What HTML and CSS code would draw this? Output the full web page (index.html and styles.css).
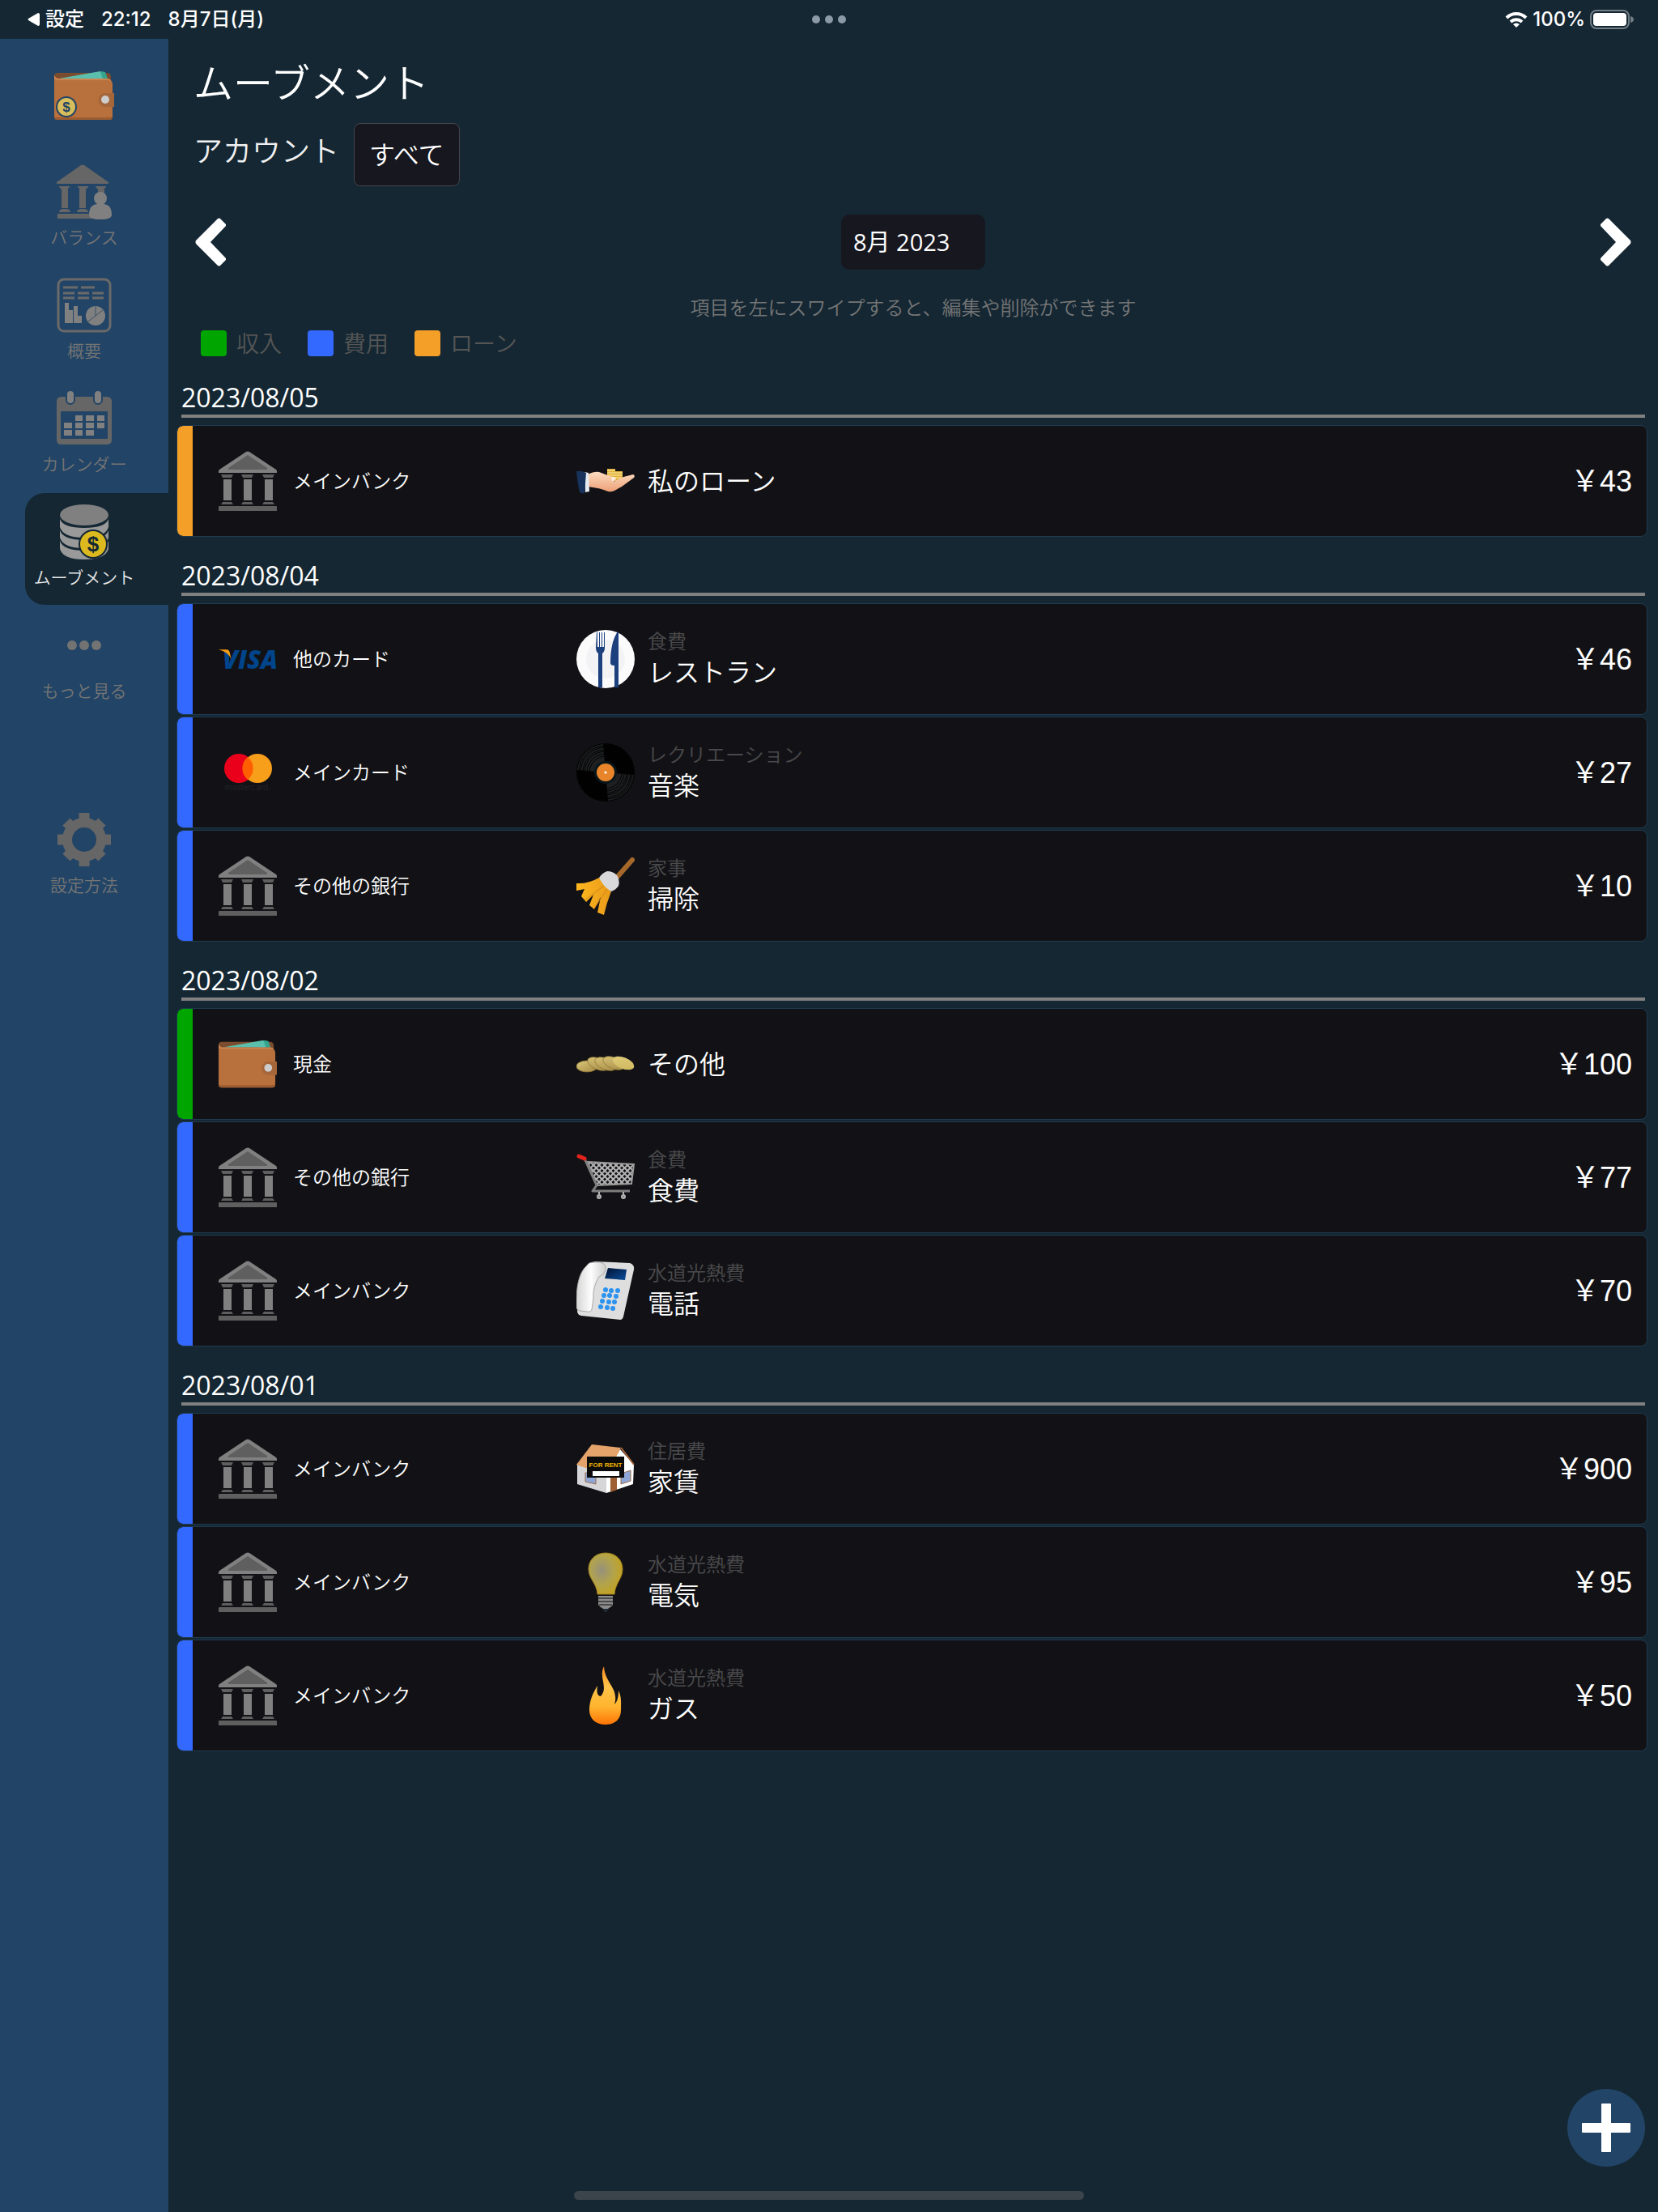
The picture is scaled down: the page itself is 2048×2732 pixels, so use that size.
FILE: index.html
```html
<!DOCTYPE html>
<html lang="ja">
<head>
<meta charset="utf-8">
<meta name="viewport" content="width=device-width, initial-scale=1">
<title>ムーブメント</title>
<link rel="stylesheet" href="styles.css">
</head>
<body>
<svg class="sprite" aria-hidden="true">
  <defs>
    <linearGradient id="flame-fill" x1="0" y1="0" x2="0" y2="1"><stop offset="0" stop-color="#ff8a1e"/><stop offset=".35" stop-color="#ffc44a"/><stop offset=".7" stop-color="#ffb32e"/><stop offset="1" stop-color="#ff7404"/></linearGradient>
    <radialGradient id="bulb-fill" cx=".38" cy=".42" r=".6"><stop offset="0" stop-color="#97917c"/><stop offset=".6" stop-color="#b3a44a"/><stop offset="1" stop-color="#c0a226"/></radialGradient>
    <linearGradient id="screen-fill" x1="0" y1="0" x2="1" y2="1"><stop offset="0" stop-color="#02102c"/><stop offset="1" stop-color="#0a4fa0"/></linearGradient>
    <linearGradient id="handset-fill" x1="0" y1="0" x2="1" y2="0"><stop offset="0" stop-color="#d4d4d4"/><stop offset=".5" stop-color="#fdfdfd"/><stop offset="1" stop-color="#cfcfcf"/></linearGradient>
    <linearGradient id="skin-fill" x1="0" y1="0" x2="0" y2="1"><stop offset="0" stop-color="#fbdcc0"/><stop offset="1" stop-color="#eea077"/></linearGradient>
    <linearGradient id="coin-fill" x1="0" y1="0" x2="1" y2="1"><stop offset="0" stop-color="#dcc87a"/><stop offset="1" stop-color="#a58a45"/></linearGradient>
    <linearGradient id="front-coin-fill" x1="0" y1="0" x2="1" y2="1"><stop offset="0" stop-color="#e0cd7e"/><stop offset="1" stop-color="#cdb55a"/></linearGradient>
    <linearGradient id="broom-fill" x1="0" y1="0" x2="1" y2="0"><stop offset="0" stop-color="#ffb81f"/><stop offset="1" stop-color="#e89a1a"/></linearGradient>
    <pattern id="mesh" width="7" height="7" patternUnits="userSpaceOnUse"><path d="M0 0 7 7M7 0 0 7" stroke="#b4b4b4" stroke-width="2"/></pattern>
  </defs>
  <symbol id="bank" viewBox="0 0 72 74">
    <path fill="#808080" d="M34 1q2-1 4 0L71 23q1 1 1 2v2H0v-2q0-1 1-2z"/>
    <path fill="#5f5f5f" d="M36 5 60 21v2H12v-2z"/>
    <path fill="#5f5f5f" d="M3 29h15l-2 4H5zM28 29h15l-2 4H30zM54 29h15l-2 4H56zM5 63h11l2 3H3zM30 63h11l2 3H28zM56 63h11l2 3H54zM0 69q0-1 1-1h70q1 0 1 1v5H0z"/>
    <path fill="#808080" d="M6 35h10v26H6zM31 35h10v26H31zM57 35h10v26H57z"/>
  </symbol>
  <symbol id="wallet" viewBox="0 0 74 60">
    <path fill="#7b4c2e" d="M0 6q0-4 4-4h61q5 0 5 5v5H0z"/>
    <path fill="#35a48c" d="M58 0l5 1 3 8H50z"/>
    <path fill="#5bbfae" d="M6 9 57 0l3 9z"/>
    <path fill="#b8703c" d="M0 5q2 5 6 5h60q6 1 6 6v40q0 4-4 4H4q-4 0-4-4z"/>
    <path fill="#cc8450" d="M0 5q2 4 6 4h60q3 0 5 4-2-2-5-2H6q-5 0-6-2z"/>
    <path fill="#9b5c31" d="M0 56q1 1 4 1h64q3 0 4-1 0 4-4 4H4q-4 0-4-4z"/>
    <path fill="#a5663a" d="M63 27h11v17H63a8 8 0 0 1 0-17z"/>
    <circle cx="63" cy="35" r="5" fill="#cdcdcd"/>
  </symbol>
  <symbol id="loan" viewBox="0 0 72 32">
    <path fill="#e0b03c" d="M38 1h10v15H38zM48 4h9v12h-9z"/>
    <path stroke="#fff0a0" stroke-width="1" d="M38 3h10M38 6h10M38 9h10M38 12h10M48 6h9M48 9h9M48 12h9"/>
    <path fill="url(#skin-fill)" d="M14 8q8-4 14-3 8 3 16 6 5 0 3 4l-1 2q12-7 24-9 3 1 1 4L56 23l-9 5q-4 2-8 1-8-4-25-6z"/>
    <path fill="#fff" d="M43 11q6-1 6 3l-4 3q-2-2-2-6z" opacity=".6"/>
    <path fill="#e4ebf2" d="M10 5l5 1 1 23-5 1z"/>
    <path fill="#17335c" d="M0 4q6-1 12 2l-2 25q-4 1-6-1Q1 18 0 4z"/>
  </symbol>
  <symbol id="restaurant" viewBox="0 0 72 72">
    <circle cx="36" cy="36" r="36" fill="#fbfbfc"/><circle cx="36" cy="36" r="24" fill="#f3f3f5"/>
    <path fill="#1c3f7e" d="M25 3h1v18h2V3h1v18h2V3h1v18h2V3h1v19q0 5-3 7v42h-5V29q-3-2-3-7zM51 2l1 1v68h-5V44q-5 0-5-3 0-26 9-39z"/>
  </symbol>
  <symbol id="vinyl" viewBox="0 0 72 72">
    <circle cx="36" cy="36" r="36" fill="#020202"/>
    <path fill="#1d1f20" d="M36 36 1 33A36 36 0 0 1 33 1zM36 36l35 3a36 36 0 0 1-32 32z"/>
    <g fill="none" stroke="#020202" stroke-width="1"><circle cx="36" cy="36" r="33"/><circle cx="36" cy="36" r="31"/><circle cx="36" cy="36" r="28"/><circle cx="36" cy="36" r="26"/><circle cx="36" cy="36" r="23"/><circle cx="36" cy="36" r="20"/></g>
    <circle cx="36" cy="36" r="14" fill="#08161a"/><circle cx="36" cy="36" r="11" fill="#e8842a"/><circle cx="36" cy="36" r="1.6" fill="#fff"/>
  </symbol>
  <symbol id="broom" viewBox="0 0 72 72">
    <path stroke="#a5682a" stroke-width="6" stroke-linecap="round" d="M47 29 69 4"/>
    <path fill="url(#broom-fill)" d="M28 26Q14 34 0 33v9q6-1 10-2L6 49l6 7 9-9-5 13 6 5 8-15-4 19 8 3q3-14 9-29z"/>
    <path stroke="#cf8416" stroke-width="1" d="M34 36 10 54M38 40 22 64" />
    <path fill="#d9d9dc" d="M28 26q4-6 10-8 7 0 12 5 4 6 2 13-3 5-9 7-10-6-15-17z"/>
  </symbol>
  <symbol id="coins" viewBox="0 0 72 20">
    <g fill="url(#coin-fill)" stroke="#8e7534" stroke-width=".7">
      <ellipse cx="13" cy="13" rx="13" ry="7"/>
      <ellipse cx="27" cy="10" rx="14" ry="7" transform="rotate(22 27 10)"/>
      <ellipse cx="36" cy="10" rx="14" ry="7" transform="rotate(22 36 10)"/>
      <ellipse cx="46" cy="9" rx="14" ry="7" transform="rotate(22 46 9)"/>
    </g>
    <ellipse cx="58" cy="9" rx="14" ry="7" transform="rotate(22 58 9)" fill="url(#front-coin-fill)"/>
  </symbol>
  <symbol id="cart" viewBox="0 0 72 58">
    <path fill="url(#mesh)" stroke="#9a9a9a" stroke-width="2" d="M14 10 71 13l-3 24-43 2z"/>
    <path fill="none" stroke="#7e7e7e" stroke-width="3" stroke-linejoin="round" d="m10 6 15 33-5 7h46"/>
    <path stroke="#e3231b" stroke-width="5" stroke-linecap="round" d="m3 3 7 3"/>
    <g fill="#777" stroke="#b5b5b5" stroke-width="2"><circle cx="28" cy="53" r="2"/><circle cx="58" cy="53" r="2"/><path d="M28 47v3M58 47v3"/></g>
  </symbol>
  <symbol id="phone" viewBox="0 0 72 72">
    <path fill="#dedede" d="M22 0 66 2q6 2 5 8L58 68q-1 4-4 4L6 67q-5-1-5-6z"/>
    <path fill="url(#screen-fill)" d="M39 8l23 2-2 13-25-2z"/>
    <path fill="url(#handset-fill)" stroke="#a8a8a8" stroke-width="1" d="M20 1h9q9 2 7 10-2 6-8 8-8 12-7 27l-2 13q-1 4-6 3l-9-1q-4-1-4-5Q-1 18 12 6q3-5 8-5z"/>
    <g fill="#2b93ef"><circle cx="36" cy="35" r="3"/><circle cx="43" cy="36" r="3"/><circle cx="51" cy="36" r="3"/><circle cx="34" cy="42" r="3"/><circle cx="41" cy="42" r="3"/><circle cx="49" cy="43" r="3"/><circle cx="32" cy="49" r="3"/><circle cx="40" cy="50" r="3"/><circle cx="47" cy="50" r="3"/><circle cx="30" cy="56" r="3"/><circle cx="38" cy="57" r="3"/><circle cx="45" cy="58" r="3"/></g>
  </symbol>
  <symbol id="bulb" viewBox="0 0 72 74">
    <path fill="url(#bulb-fill)" stroke="#9c7d1c" stroke-width="1" d="M36 1c13 0 21 9 21 20 0 12-9 17-10 31H26C25 38 15 33 15 21 15 10 23 1 36 1z"/>
    <path fill="#8c8c8c" d="M27 54h18v11q-2 3-5 4l-4 5-4-5q-3-1-5-4z"/>
    <path stroke="#4a4a4a" stroke-width="2" d="M27 57h18M27 61h18M28 65h16"/>
    <path fill="#1d2a38" d="M32 70h8l-4 4z"/>
  </symbol>
  <symbol id="flame" viewBox="0 0 72 72">
    <path fill="url(#flame-fill)" d="M34 0c-7 14 6 26-4 37-5 0-5-7-4-13-5 8-10 18-10 30 0 11 8 18 20 18s19-7 19-18c0-8 1-16-3-24 0 7-1 13-5 17 6-20-12-26-13-47z"/>
  </symbol>
  <symbol id="nav-balance" viewBox="0 0 68 68">
    <path fill="#666" d="M30 1q2-1 4 0L64 22q1 2-2 2H2q-3 0-2-2zM3 27h13v1l-3 3H6l-3-3zM26 27h13v1l-3 3h-7l-3-3zM48 27h13v1l-3 3h-7l-3-3zM6 31h8v23H6zM28 31h8v23h-8zM51 31h8v10h-8zM3 59q0-3 4-4h6q4 1 4 4zM25 59q0-3 4-4h6q4 1 4 4zM1 61h55v6H1z"/>
    <g fill="#808080"><path d="M40 62q0-12 10-13h8q10 1 10 13 0 6-14 6t-14-6z"/><circle cx="54" cy="42" r="8"/></g>
  </symbol>
  <symbol id="nav-overview" viewBox="0 0 68 68">
    <rect x="2" y="2" width="64" height="64" rx="7" fill="none" stroke="#6a6a6a" stroke-width="3"/>
    <path stroke="#6a6a6a" stroke-width="3" d="M8 12h18M30 12h17M8 19h14M26 19h14M44 19h14M8 25h14M26 25h14M44 25h14"/>
    <path fill="#808080" d="M10 31h5v25h-5zM15 40h5v16h-5zM21 35h5v21h-5zM26 47h5v9h-5z"/>
    <circle cx="48" cy="47" r="12" fill="#808080"/><path stroke="#3a506a" stroke-width="1" fill="none" d="M48 35v12M39 54l18-14"/>
  </symbol>
  <symbol id="nav-calendar" viewBox="0 0 68 68">
    <path fill="#666" fill-rule="evenodd" d="M6 7h56q6 0 6 6v47q0 6-6 6H6q-6 0-6-6V13q0-6 6-6zM5 25v34h58V25z"/>
    <g fill="#808080" stroke="#224466" stroke-width="2"><rect x="12" y="-1" width="10" height="17" rx="5"/><rect x="46" y="-1" width="10" height="17" rx="5"/></g>
    <path fill="#808080" d="M23 30h9v7h-9zM36 30h10v7H36zM50 30h9v7h-9zM9 39h10v7H9zM23 39h9v7h-9zM36 39h10v7H36zM50 39h9v7h-9zM9 48h10v7H9zM23 48h9v7h-9zM36 48h10v7H36z"/>
  </symbol>
  <symbol id="nav-more" viewBox="0 0 68 68"><g fill="#737373"><circle cx="19" cy="34" r="6"/><circle cx="34" cy="34" r="6"/><circle cx="49" cy="34" r="6"/></g></symbol>
  <symbol id="nav-settings" viewBox="0 0 68 68">
    <g fill="none" stroke="#666"><circle cx="34" cy="34" r="21" stroke-width="12"/>
    <g stroke-width="13"><path d="M34 1v10M34 57v10M1 34h10M57 34h10"/><path d="m12 12 7 7M49 49l7 7M56 12l-7 7M19 49l-7 7"/></g></g>
  </symbol>
</svg>

<header class="status">
  <div class="status-side">
    <a class="status-back" href="#settings"><svg width="15" height="16" viewBox="0 0 15 16" aria-hidden="true"><path fill="#fff" d="M1 7 13 0q2 0 2 2v12q0 2-2 2L1 9q-1-1 0-2z"/></svg>設定</a>
    <span>22:12</span><span>8月7日(月)</span>
  </div>
  <svg class="status-dots" viewBox="0 0 44 10" aria-hidden="true"><g fill="#8b9aa6"><circle cx="6" cy="5" r="5"/><circle cx="22" cy="5" r="5"/><circle cx="38" cy="5" r="5"/></g></svg>
  <div class="status-side status-right">
    <svg width="28" height="20" viewBox="0 0 28 20" aria-hidden="true"><g fill="none" stroke="#fff" stroke-width="4"><path d="M2 8a17 17 0 0 1 24 0"/><path d="M7 13a10 10 0 0 1 14 0"/></g><path fill="#fff" d="m10 16a6 6 0 0 1 8 0l-4 4z"/></svg>
    <span>100%</span>
    <svg width="54" height="24" viewBox="0 0 54 24" aria-hidden="true"><rect x="1" y="1" width="47" height="22" rx="7" fill="none" stroke="#727d85" stroke-width="2"/><rect x="4" y="4" width="41" height="16" rx="4" fill="#fff"/><path fill="#727d85" d="M50 8q4 1 4 4t-4 4z"/></svg>
  </div>
</header>

<div class="layout">
  <nav class="sidebar">
    <svg class="logo" viewBox="0 0 74 60" role="img" aria-label="Wallet"><use href="#wallet" width="74" height="60"/><circle cx="15" cy="44" r="12" fill="#d8bd5c" stroke="#224466" stroke-width="2"/><text x="15" y="50" class="logo-sign">$</text></svg>
    <a class="tab" href="#balance"><svg><use href="#nav-balance"/></svg>バランス</a>
    <a class="tab" href="#overview"><svg><use href="#nav-overview"/></svg>概要</a>
    <a class="tab" href="#calendar"><svg><use href="#nav-calendar"/></svg>カレンダー</a>
    <a class="tab tab-active" href="#movements" aria-current="page"><svg viewBox="0 0 68 68">
      <g fill="#999"><path d="M4 18q4 11 30 11t30-11v10q-4 13-30 13T4 28z"/><path d="M4 32q4 12 30 12t30-12v9q-4 13-30 13T4 41z"/><path d="M4 45q4 12 30 12t30-12v10q-4 13-30 13T4 55z"/></g>
      <ellipse cx="34" cy="13" rx="30" ry="13" fill="#808080"/>
      <circle cx="45" cy="49" r="17" fill="#dcb91f" stroke="#142733" stroke-width="2"/>
      <text x="45" y="58" class="coin-sign">$</text>
    </svg>ムーブメント</a>
    <a class="tab" href="#more"><svg><use href="#nav-more"/></svg>もっと見る</a>
    <a class="tab tab-settings" href="#settings"><svg><use href="#nav-settings"/></svg>設定方法</a>
  </nav>

  <main class="content">
    <h1>ムーブメント</h1>
    <div class="account-filter">
      <label for="account">アカウント</label>
      <button id="account" type="button">すべて</button>
    </div>
    <div class="month-nav">
      <button class="arrow" type="button" aria-label="前の月"><svg width="38" height="60" viewBox="0 0 38 60"><path fill="#fff" d="M1 28 28 1q2-1 3 0l7 7v2L19 30l19 20v2l-7 7q-1 1-3 0L1 32q-1-2 0-4z"/></svg></button>
      <input class="month" type="text" value="8月 2023" aria-label="月" readonly>
      <button class="arrow" type="button" aria-label="次の月"><svg width="38" height="60" viewBox="0 0 38 60"><path fill="#fff" d="M37 28 10 1Q8 0 7 1L0 8v2l19 20L0 50v2l7 7q1 1 3 0l27-27q1-2 0-4z"/></svg></button>
    </div>
    <p class="hint">項目を左にスワイプすると、編集や削除ができます</p>
    <ul class="legend">
      <li class="income">収入</li>
      <li class="expense">費用</li>
      <li class="loan">ローン</li>
    </ul>

    <div class="days">
      <section>
        <h2>2023/08/05</h2>
        <ul class="rows">
          <li class="row loan"><div class="account"><svg><use href="#bank"/></svg>メインバンク</div><svg class="icon"><use href="#loan"/></svg><div class="category">私のローン</div><div class="amount">￥43</div></li>
        </ul>
      </section>
      <section>
        <h2>2023/08/04</h2>
        <ul class="rows">
          <li class="row expense"><div class="account"><svg viewBox="0 0 74 74"><text x="5" y="49" class="visa-word">VISA</text><path fill="#f59b11" d="M0 25h10q3 0 4 3l2 9Q12 28 0 25z"/></svg>他のカード</div><svg class="icon"><use href="#restaurant"/></svg><div class="category"><small>食費</small>レストラン</div><div class="amount">￥46</div></li>
          <li class="row expense"><div class="account"><svg viewBox="0 0 72 72"><circle cx="25" cy="31" r="18" fill="#eb001b"/><circle cx="48" cy="31" r="18" fill="#f79e1b"/><path fill="#ff5f00" d="M36 17a18 18 0 0 1 0 28 18 18 0 0 1 0-28z"/><text x="36" y="58" class="mastercard-word">mastercard.</text></svg>メインカード</div><svg class="icon"><use href="#vinyl"/></svg><div class="category"><small>レクリエーション</small>音楽</div><div class="amount">￥27</div></li>
          <li class="row expense"><div class="account"><svg><use href="#bank"/></svg>その他の銀行</div><svg class="icon"><use href="#broom"/></svg><div class="category"><small>家事</small>掃除</div><div class="amount">￥10</div></li>
        </ul>
      </section>
      <section>
        <h2>2023/08/02</h2>
        <ul class="rows">
          <li class="row income"><div class="account"><svg><use href="#wallet"/></svg>現金</div><svg class="icon"><use href="#coins"/></svg><div class="category">その他</div><div class="amount">￥100</div></li>
          <li class="row expense"><div class="account"><svg><use href="#bank"/></svg>その他の銀行</div><svg class="icon"><use href="#cart"/></svg><div class="category"><small>食費</small>食費</div><div class="amount">￥77</div></li>
          <li class="row expense"><div class="account"><svg><use href="#bank"/></svg>メインバンク</div><svg class="icon"><use href="#phone"/></svg><div class="category"><small>水道光熱費</small>電話</div><div class="amount">￥70</div></li>
        </ul>
      </section>
      <section>
        <h2>2023/08/01</h2>
        <ul class="rows">
          <li class="row expense"><div class="account"><svg><use href="#bank"/></svg>メインバンク</div><svg class="icon" viewBox="0 0 72 60">
            <path fill="#d6d6d8" d="M1 24h36v36L1 49z"/><path fill="#fff" d="M37 34 54 6l17 19-1 24-33 11z"/>
            <path fill="#e3a36b" d="M19 0l36 4-18 34L0 25z"/><path fill="none" stroke="#a8673c" stroke-width="2" d="M55 4l16 21"/>
            <path fill="#8ea6d6" stroke="#9c6b4b" stroke-width="1" d="M11 35h13v14l-13-3zM55 36l12-4v13l-12 4z"/>
            <path fill="#9e5f35" d="M42 38h8v18l-8 3z"/>
            <path fill="#0b0b0b" d="M13 15h46v26H13z"/><path fill="#fff" d="M20 33h33v6H20z"/>
            <text x="36" y="28" class="sign-word">FOR RENT</text>
          </svg><div class="category"><small>住居費</small>家賃</div><div class="amount">￥900</div></li>
          <li class="row expense"><div class="account"><svg><use href="#bank"/></svg>メインバンク</div><svg class="icon"><use href="#bulb"/></svg><div class="category"><small>水道光熱費</small>電気</div><div class="amount">￥95</div></li>
          <li class="row expense"><div class="account"><svg><use href="#bank"/></svg>メインバンク</div><svg class="icon"><use href="#flame"/></svg><div class="category"><small>水道光熱費</small>ガス</div><div class="amount">￥50</div></li>
        </ul>
      </section>
    </div>
  </main>
</div>

<button class="add" type="button" aria-label="追加"><svg width="60" height="60" viewBox="0 0 60 60"><path fill="#fff" d="M25 0h10q1 0 1 1v23h23q1 0 1 1v10q0 1-1 1H36v23q0 1-1 1H25q-1 0-1-1V36H1q-1 0-1-1V25q0-1 1-1h23V1q0-1 1-1z"/></svg></button>
<div class="home-indicator"></div>
</body>
</html>
```
FILE: styles.css
```css
:root {
  --bg: #142733;
  --side: #224466;
  --income: #00a500;
  --expense: #3369ff;
  --loan: #f39f28;
}

* { box-sizing: border-box; }

body {
  margin: 0;
  min-height: 100vh;
  display: flex;
  flex-direction: column;
  background: var(--bg);
  color: #fff;
  font-family: "Open Sans", "Noto Sans CJK JP", sans-serif;
  font-weight: 350;
}

h1, h2, p, ul { margin: 0; padding: 0; }
ul { list-style: none; }
a { color: inherit; text-decoration: none; }
button, input { font: inherit; color: inherit; border: 0; margin: 0; }
svg { display: block; flex: none; }
.sprite { position: absolute; width: 0; height: 0; }

/* Status bar */
.status {
  height: 48px;
  display: grid;
  grid-template-columns: 1fr auto 1fr;
  align-items: center;
  padding: 0 30px;
  font: 500 24px/48px Inter, "Noto Sans CJK JP", sans-serif;
}
.status-side { display: flex; align-items: center; gap: 21px; padding-left: 4px; }
.status-back { display: flex; align-items: center; gap: 7px; }
.status-dots { width: 44px; height: 10px; }
.status-right { justify-content: flex-end; gap: 6px; }

/* Sidebar */
.layout { flex: 1; display: flex; }
.sidebar {
  flex: none;
  width: 208px;
  background: var(--side);
  padding-top: 40px;
}
.logo { width: 74px; height: 60px; margin: 0 auto 41px; }
.tab {
  display: flex;
  flex-direction: column;
  align-items: center;
  gap: 7px;
  height: 138px;
  margin: 0 0 2px 31px;
  padding: 14px 31px 0 0;
  border-radius: 24px 0 0 24px;
  color: #757575;
  font-size: 21px;
  line-height: 30px;
  white-space: nowrap;
}
.tab svg { width: 68px; height: 68px; }
.tab-active { background: var(--bg); color: #e6e6e6; }
.tab-settings { margin-top: 102px; }

/* Page header */
.content { flex: 1; min-width: 0; padding-top: 22px; }
h1 { padding-left: 31px; font-size: 49px; line-height: 64px; font-weight: 350; }
.account-filter {
  display: flex;
  align-items: center;
  gap: 18px;
  margin-top: 18px;
  padding-left: 31px;
}
.account-filter label { padding-bottom: 8px; font-size: 36px; line-height: 48px; color: #f0f0f0; }
.account-filter button {
  height: 78px;
  padding: 0 18px 4px;
  border: 1px solid #45454d;
  border-radius: 8px;
  background: #17171f;
  font-size: 32px;
}
.month-nav {
  display: flex;
  align-items: center;
  justify-content: space-between;
  margin-top: 35px;
  padding: 0 33px;
}
.arrow { padding: 0; background: none; }
.month {
  width: 178px;
  height: 68px;
  padding: 0 15px 4px;
  border-radius: 10px;
  background: #17171f;
  font-size: 29px;
  font-weight: 400;
}
.hint { margin-top: 29px; text-align: center; font-size: 24px; line-height: 36px; color: #757575; }
.legend {
  display: flex;
  gap: 32px;
  margin-top: 10px;
  padding-left: 40px;
  font-size: 28px;
  line-height: 32px;
  color: #555;
}
.legend li { display: flex; gap: 12px; }
.legend li::before { content: ""; width: 32px; height: 32px; border-radius: 4px; background: var(--kind); }
.income { --kind: var(--income); }
.expense { --kind: var(--expense); }
.loan { --kind: var(--loan); }

/* Movements */
.days { display: flex; flex-direction: column; gap: 27px; padding: 30px 13px 120px 10px; }
h2 {
  margin: 0 3px 9px 6px;
  border-bottom: 4px solid #808080;
  font-size: 32px;
  line-height: 42px;
  font-weight: 400;
}
.rows { display: flex; flex-direction: column; gap: 2px; }
.row {
  display: flex;
  align-items: center;
  height: 138px;
  padding-right: 18px;
  border: 1px solid #1f3b50;
  border-radius: 8px;
  background: #121216;
  overflow: hidden;
}
.row::before { content: ""; align-self: stretch; width: 19px; border-radius: 7px 0 0 7px; background: var(--kind); }
.account {
  display: flex;
  align-items: center;
  gap: 20px;
  width: 442px;
  margin-left: 32px;
  font-size: 24px;
  line-height: 32px;
}
.account svg { width: 72px; height: 74px; }
.icon { width: 72px; height: 74px; }
.category { flex: 1; margin-left: 16px; font-size: 32px; line-height: 44px; }
.category small { display: block; font-size: 24px; line-height: 32px; color: #4a4a4c; }
.amount { padding-top: 2px; font: 36px/44px "Liberation Sans", "Noto Sans CJK JP", sans-serif; }

/* Lettering inside the icons */
.visa-word { font: italic 800 32px "Open Sans", sans-serif; fill: #00458c; }
.mastercard-word { font: 10px Inter, sans-serif; fill: #232328; text-anchor: middle; }
.sign-word { font: bold 8px "Liberation Sans", sans-serif; fill: #f0b400; text-anchor: middle; }
.coin-sign { font: bold 26px "Liberation Sans", sans-serif; fill: #142733; text-anchor: middle; }
.logo-sign { font: bold 17px "Liberation Sans", sans-serif; fill: #224466; text-anchor: middle; }

/* Floating controls */
.add {
  position: fixed;
  right: 16px;
  bottom: 56px;
  width: 96px;
  height: 96px;
  display: grid;
  place-items: center;
  padding: 0;
  border-radius: 50%;
  background: var(--side);
}
.home-indicator {
  position: fixed;
  left: 50%;
  bottom: 15px;
  width: 630px;
  height: 11px;
  margin-left: -315px;
  border-radius: 6px;
  background: #3b444a;
}
```
